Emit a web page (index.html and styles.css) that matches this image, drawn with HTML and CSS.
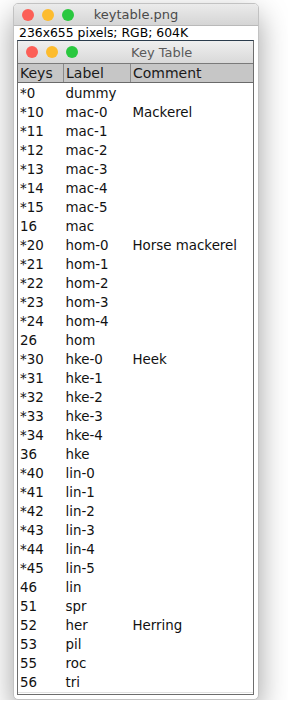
FILE: index.html
```html
<!DOCTYPE html>
<html lang="en">
<head>
    <meta charset="UTF-8">
    <meta name="viewport" content="width=device-width, initial-scale=1.0">
    <title>keytable.png</title>
    <link rel="stylesheet" href="styles.css">
</head>
<body>
    <div class="window">
        <div class="titlebar">
            <span class="light red"></span>
            <span class="light yellow"></span>
            <span class="light green"></span>
            <span class="title">keytable.png</span>
        </div>
        <div class="info">236x655 pixels; RGB; 604K</div>

        <div class="frame">
            <div class="frame-bar">
                <span class="light red"></span>
                <span class="light yellow"></span>
                <span class="light green"></span>
                <span class="frame-title">Key Table</span>
            </div>
            <table class="keys">
                <thead>
                    <tr><th class="c1">Keys</th><th class="c2">Label</th><th>Comment</th></tr>
                </thead>
                <tbody>
                    <tr><td>*0</td><td>dummy</td><td></td></tr>
                    <tr><td>*10</td><td>mac-0</td><td>Mackerel</td></tr>
                    <tr><td>*11</td><td>mac-1</td><td></td></tr>
                    <tr><td>*12</td><td>mac-2</td><td></td></tr>
                    <tr><td>*13</td><td>mac-3</td><td></td></tr>
                    <tr><td>*14</td><td>mac-4</td><td></td></tr>
                    <tr><td>*15</td><td>mac-5</td><td></td></tr>
                    <tr><td>16</td><td>mac</td><td></td></tr>
                    <tr><td>*20</td><td>hom-0</td><td>Horse mackerel</td></tr>
                    <tr><td>*21</td><td>hom-1</td><td></td></tr>
                    <tr><td>*22</td><td>hom-2</td><td></td></tr>
                    <tr><td>*23</td><td>hom-3</td><td></td></tr>
                    <tr><td>*24</td><td>hom-4</td><td></td></tr>
                    <tr><td>26</td><td>hom</td><td></td></tr>
                    <tr><td>*30</td><td>hke-0</td><td>Heek</td></tr>
                    <tr><td>*31</td><td>hke-1</td><td></td></tr>
                    <tr><td>*32</td><td>hke-2</td><td></td></tr>
                    <tr><td>*33</td><td>hke-3</td><td></td></tr>
                    <tr><td>*34</td><td>hke-4</td><td></td></tr>
                    <tr><td>36</td><td>hke</td><td></td></tr>
                    <tr><td>*40</td><td>lin-0</td><td></td></tr>
                    <tr><td>*41</td><td>lin-1</td><td></td></tr>
                    <tr><td>*42</td><td>lin-2</td><td></td></tr>
                    <tr><td>*43</td><td>lin-3</td><td></td></tr>
                    <tr><td>*44</td><td>lin-4</td><td></td></tr>
                    <tr><td>*45</td><td>lin-5</td><td></td></tr>
                    <tr><td>46</td><td>lin</td><td></td></tr>
                    <tr><td>51</td><td>spr</td><td></td></tr>
                    <tr><td>52</td><td>her</td><td>Herring</td></tr>
                    <tr><td>53</td><td>pil</td><td></td></tr>
                    <tr><td>55</td><td>roc</td><td></td></tr>
                    <tr><td>56</td><td>tri</td><td></td></tr>
                </tbody>
            </table>
        </div>
    </div>
</body>
</html>
```

FILE: styles.css
```css
html, body {
    margin: 0;
    background: #fff;
}
body {
    font-family: "DejaVu Sans", sans-serif;
    font-size: 13px;
    color: #000;
    padding: 3px 0 0 13px;
}
.window {
    width: 244px;
    height: 695px;
    border: 1px solid #c2c2c2;
    border-radius: 5px;
    background: #fff;
    box-shadow: 0 12px 30px rgba(0,0,0,0.38);
    overflow: hidden;
}
.titlebar {
    height: 21px;
    display: flex;
    align-items: center;
    padding-left: 8px;
    gap: 8px;
    background: linear-gradient(#ebebeb, #d5d5d5);
    border-bottom: 1px solid #b9b9b9;
    position: relative;
}
.title {
    position: absolute;
    left: 0;
    right: 0;
    text-align: center;
    color: #4a4a4a;
    font-size: 13px;
}
.light {
    width: 12px;
    height: 12px;
    border-radius: 50%;
    display: inline-block;
}
.red { background: #fc5f57; }
.yellow { background: #fdbc2e; }
.green { background: #2ac83f; }
.info {
    height: 14px;
    line-height: 14px;
    padding-left: 5px;
    font-size: 12.4px;
    color: #000;
}
.frame {
    margin: 0 0 0 3px;
    width: 235px;
    height: 653px;
    border: 1px solid #6d6d6d;
    border-top-color: #2b3c4d;
    box-shadow: inset 0 1px 0 #7d9bb5;
    overflow: hidden;
}
.frame-bar {
    height: 22px;
    display: flex;
    align-items: center;
    padding-left: 8px;
    gap: 8px;
    background: linear-gradient(#efefef, #d9d9d9);
    border-bottom: 1px solid #7a7a7a;
    position: relative;
}
.frame-title {
    position: absolute;
    left: 113px;
    color: #5a5a5a;
}
.keys {
    border-collapse: collapse;
    width: 100%;
    table-layout: fixed;
}
.keys th {
    height: 18px;
    padding: 0 0 0 2px;
    text-align: left;
    font-weight: normal;
    font-size: 14px;
    color: #1a1a1a;
    background: #c6c6c6;
    border-bottom: 1px solid #6a6a6a;
    border-right: 1px solid #8a8a8a;
}
.keys th:last-child {
    border-right: none;
}
.keys .c1 { width: 43px; }
.keys .c2 { width: 64px; }
.keys td {
    height: 19px;
    padding: 0 0 0 2px;
    line-height: 19px;
    font-size: 13.4px;
    color: #111;
    white-space: nowrap;
}
.keys tbody tr:first-child td {
    padding-top: 1px;
}
.keys tbody tr:last-child td {
    border-bottom: 1px solid #e2e2e2;
}
```
